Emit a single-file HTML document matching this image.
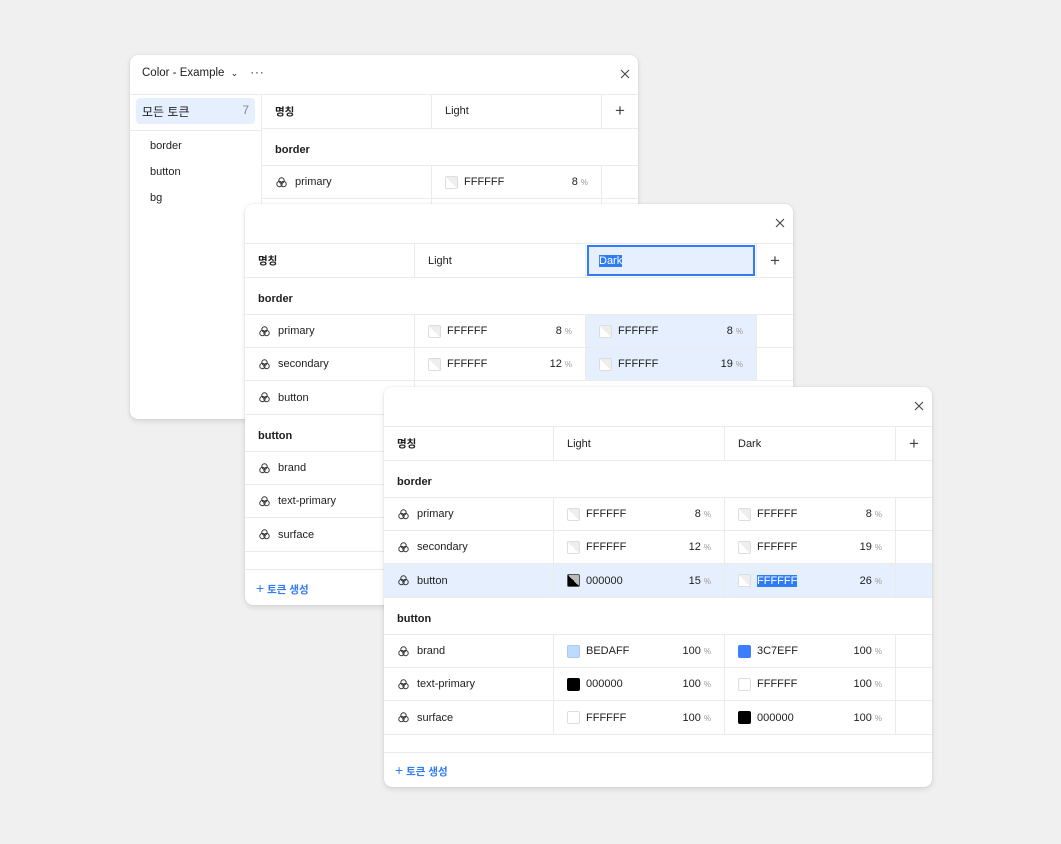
<!DOCTYPE html>
<html><head><meta charset="utf-8"><style>
*{box-sizing:border-box;margin:0;padding:0}
body{width:1061px;height:844px;background:#f0f0f0;position:relative;overflow:hidden;font-family:"Liberation Sans","Noto Sans CJK KR",sans-serif;font-size:11px;color:#1e1e1e}
.p{position:absolute;background:#fff;border-radius:8px;box-shadow:0 2px 6px rgba(0,0,0,.12),0 0 1px rgba(0,0,0,.15);overflow:hidden}
.x{position:absolute;width:10px;height:10px}
.row{position:absolute;left:0;right:0;display:flex;border-bottom:1px solid #ebebeb}
.c{border-right:1px solid #ebebeb;position:relative;display:flex;align-items:center;height:100%}
.c:last-child{border-right:none;flex:1}
.hd{font-weight:bold;font-size:10.5px;padding-left:13px}
.hl{font-weight:normal;font-size:11px}
.g{font-weight:bold;padding-left:13px;padding-top:5px;display:flex;align-items:center}
.nm{padding-left:13px}
.nm svg{margin-right:7px}
.sw{width:13px;height:13px;border:1px solid #ddd;border-radius:2px;margin-left:13px;margin-right:6px;background:linear-gradient(45deg,#fff 50%,#eee 50%)}
.pc{position:absolute;right:13px}
.pc i{font-style:normal;color:#999;font-size:8px;margin-left:3px}
.plus{justify-content:center;font-size:17px;color:#444;font-weight:300}
.sel{background:#e5effe}
.foot{position:absolute;color:#2f7cf6;font-size:10.5px;font-weight:bold}
</style></head><body>

<svg width="0" height="0" style="position:absolute"><defs>
<symbol id="ic" viewBox="0 0 14 14"><g fill="none" stroke="#333" stroke-width="1"><circle cx="7" cy="4.8" r="2.9"/><circle cx="4.8" cy="8.7" r="2.9"/><circle cx="9.2" cy="8.7" r="2.9"/></g></symbol>
<symbol id="cx" viewBox="0 0 10 10"><path d="M1 1L9 9M9 1L1 9" stroke="#444" stroke-width="1.1" fill="none"/></symbol>
</defs></svg>

<!-- Panel 1 -->
<div class="p" style="left:130px;top:55px;width:508px;height:364px">
  <div style="position:absolute;left:12px;top:12px;font-size:11.5px">Color - Example <span style="font-size:9px;margin-left:3px">&#8964;</span><span style="margin-left:12px;letter-spacing:1px">···</span></div>
  <svg class="x" style="right:8px;top:14px"><use href="#cx"/></svg>
  <div style="position:absolute;left:0;top:39px;width:508px;border-top:1px solid #ebebeb"></div>
  <div style="position:absolute;left:6px;top:43px;width:119px;height:26px;background:#e5effe;border-radius:4px;font-size:12px;padding:5px 6px;display:flex;justify-content:space-between"><span>모든 토큰</span><span style="color:#888">7</span></div>
  <div style="position:absolute;left:0;top:75px;width:131px;border-top:1px solid #ebebeb"></div>
  <div style="position:absolute;left:20px;top:78px;line-height:26px">border<br>button<br>bg</div>
  <div style="position:absolute;left:131px;top:39px;bottom:0;border-left:1px solid #ebebeb"></div>
  <div style="position:absolute;left:132px;top:39px;right:0;height:400px">
    <div class="row" style="top:0;height:35px"><div class="c hd" style="width:170px">명칭</div><div class="c hd hl" style="width:170px">Light</div><div class="c plus">+</div></div>
    <div class="row" style="top:35px;height:37px"><div class="g">border</div></div>
    <div class="row" style="top:72px;height:33px"><div class="c nm" style="width:170px"><svg width="13" height="13"><use href="#ic"/></svg>primary</div><div class="c" style="width:170px"><div class="sw"></div>FFFFFF<span class="pc">8<i>%</i></span></div><div class="c"></div></div>
    <div class="row" style="top:105px;height:33px"><div class="c" style="width:170px"></div><div class="c" style="width:170px"></div><div class="c"></div></div>
  </div>
</div>

<!-- Panel 2 -->
<div class="p" style="left:245px;top:204px;width:548px;height:401px">
  <svg class="x" style="right:8px;top:14px"><use href="#cx"/></svg>
  <div class="row" style="top:39px;height:35px;border-top:1px solid #ebebeb"><div class="c hd" style="width:170px">명칭</div><div class="c hd hl" style="width:171px">Light</div><div class="c" style="width:171px;padding:1px"><div style="width:100%;height:100%;border:2px solid #2f7cf6;background:#e5effe;display:flex;align-items:center;padding-left:10px"><span style="background:#2f7cf6;color:#fff">Dark</span></div></div><div class="c plus">+</div></div>
  <div class="row" style="top:74px;height:37px"><div class="g">border</div></div>
  <div class="row" style="top:111px;height:33px"><div class="c nm" style="width:170px"><svg width="13" height="13"><use href="#ic"/></svg>primary</div><div class="c" style="width:171px"><div class="sw"></div>FFFFFF<span class="pc">8<i>%</i></span></div><div class="c sel" style="width:171px"><div class="sw"></div>FFFFFF<span class="pc">8<i>%</i></span></div><div class="c"></div></div>
  <div class="row" style="top:144px;height:33px"><div class="c nm" style="width:170px"><svg width="13" height="13"><use href="#ic"/></svg>secondary</div><div class="c" style="width:171px"><div class="sw"></div>FFFFFF<span class="pc">12<i>%</i></span></div><div class="c sel" style="width:171px"><div class="sw"></div>FFFFFF<span class="pc">19<i>%</i></span></div><div class="c"></div></div>
  <div class="row" style="top:177px;height:34px"><div class="c nm" style="width:170px"><svg width="13" height="13"><use href="#ic"/></svg>button</div><div class="c"></div></div>
  <div class="row" style="top:211px;height:37px"><div class="g">button</div></div>
  <div class="row" style="top:248px;height:33px"><div class="c nm" style="width:170px"><svg width="13" height="13"><use href="#ic"/></svg>brand</div><div class="c"></div></div>
  <div class="row" style="top:281px;height:33px"><div class="c nm" style="width:170px"><svg width="13" height="13"><use href="#ic"/></svg>text-primary</div><div class="c"></div></div>
  <div class="row" style="top:314px;height:34px"><div class="c nm" style="width:170px"><svg width="13" height="13"><use href="#ic"/></svg>surface</div><div class="c"></div></div>
  <div class="row" style="top:348px;height:18px"></div>
  <div class="foot" style="left:11px;top:376px"><span style="font-size:14px;font-weight:normal">+</span> 토큰 생성</div>
</div>

<!-- Panel 3 -->
<div class="p" style="left:384px;top:387px;width:548px;height:400px">
  <svg class="x" style="right:8px;top:14px"><use href="#cx"/></svg>
  <div class="row" style="top:39px;height:35px;border-top:1px solid #ebebeb"><div class="c hd" style="width:170px">명칭</div><div class="c hd hl" style="width:171px">Light</div><div class="c hd hl" style="width:171px">Dark</div><div class="c plus">+</div></div>
  <div class="row" style="top:74px;height:37px"><div class="g">border</div></div>
  <div class="row" style="top:111px;height:33px"><div class="c nm" style="width:170px"><svg width="13" height="13"><use href="#ic"/></svg>primary</div><div class="c" style="width:171px"><div class="sw"></div>FFFFFF<span class="pc">8<i>%</i></span></div><div class="c" style="width:171px"><div class="sw"></div>FFFFFF<span class="pc">8<i>%</i></span></div><div class="c"></div></div>
  <div class="row" style="top:144px;height:33px"><div class="c nm" style="width:170px"><svg width="13" height="13"><use href="#ic"/></svg>secondary</div><div class="c" style="width:171px"><div class="sw"></div>FFFFFF<span class="pc">12<i>%</i></span></div><div class="c" style="width:171px"><div class="sw"></div>FFFFFF<span class="pc">19<i>%</i></span></div><div class="c"></div></div>
  <div class="row sel" style="top:177px;height:34px"><div class="c nm" style="width:170px"><svg width="13" height="13"><use href="#ic"/></svg>button</div><div class="c" style="width:171px"><div class="sw" style="background:linear-gradient(45deg,#000 50%,#bbb 50%);border-color:#555"></div>000000<span class="pc">15<i>%</i></span></div><div class="c" style="width:171px"><div class="sw"></div><span style="background:#2f7cf6;color:#fff">FFFFFF</span><span class="pc">26<i>%</i></span></div><div class="c"></div></div>
  <div class="row" style="top:211px;height:37px"><div class="g">button</div></div>
  <div class="row" style="top:248px;height:33px"><div class="c nm" style="width:170px"><svg width="13" height="13"><use href="#ic"/></svg>brand</div><div class="c" style="width:171px"><div class="sw" style="background:#bedaff;border-color:#aac8f0"></div>BEDAFF<span class="pc">100<i>%</i></span></div><div class="c" style="width:171px"><div class="sw" style="background:#3c7eff;border-color:#3c7eff"></div>3C7EFF<span class="pc">100<i>%</i></span></div><div class="c"></div></div>
  <div class="row" style="top:281px;height:33px"><div class="c nm" style="width:170px"><svg width="13" height="13"><use href="#ic"/></svg>text-primary</div><div class="c" style="width:171px"><div class="sw" style="background:#000;border-color:#000"></div>000000<span class="pc">100<i>%</i></span></div><div class="c" style="width:171px"><div class="sw" style="background:#fff"></div>FFFFFF<span class="pc">100<i>%</i></span></div><div class="c"></div></div>
  <div class="row" style="top:314px;height:34px"><div class="c nm" style="width:170px"><svg width="13" height="13"><use href="#ic"/></svg>surface</div><div class="c" style="width:171px"><div class="sw" style="background:#fff"></div>FFFFFF<span class="pc">100<i>%</i></span></div><div class="c" style="width:171px"><div class="sw" style="background:#000;border-color:#000"></div>000000<span class="pc">100<i>%</i></span></div><div class="c"></div></div>
  <div class="row" style="top:348px;height:18px"></div>
  <div class="foot" style="left:11px;top:375px"><span style="font-size:14px;font-weight:normal">+</span> 토큰 생성</div>
</div>
</body></html>
